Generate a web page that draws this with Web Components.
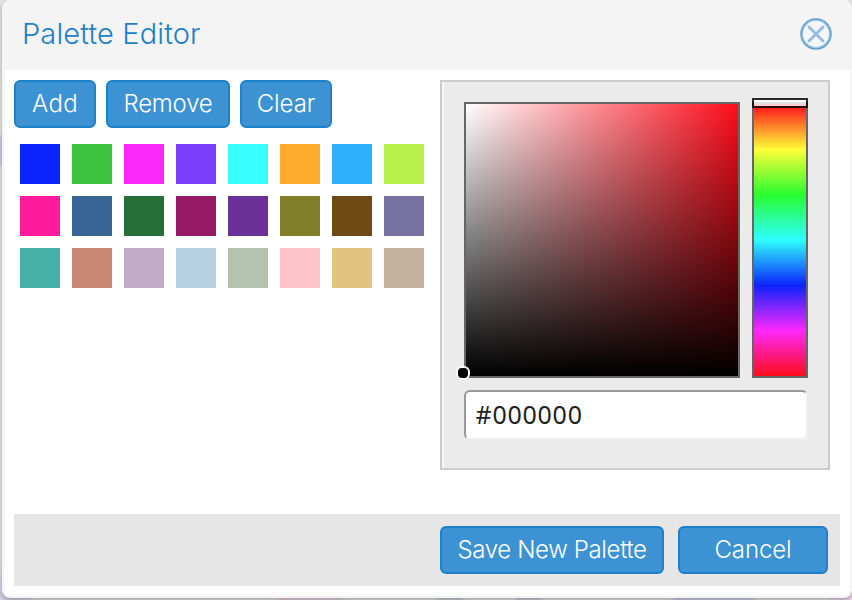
<!DOCTYPE html>
<html lang="en"><head><meta charset="utf-8"><title>Palette Editor</title>
<style>
html,body{margin:0;height:100%;overflow:hidden}
body{font-family:Inter,"Liberation Sans",sans-serif;
background:linear-gradient(90deg,#d4d0e4 28px,#e4e4e4 34px 276px,#e6cfe0 282px 340px,#e4e4e4 346px 434px,#c6d0d6 440px 460px,#e4e4e4 466px 514px,#ccc8d2 518px 538px,#e4e4e4 544px 670px,#ccccea 676px 752px,#e4e4e4 758px 824px,#ead2ea 832px) 0 100%/852px 6px no-repeat,
linear-gradient(#e4e4e4 134px,#cfcbe0 138px 164px,#e4e4e4 168px 560px,#d4d0e4 590px)}
</style></head><body>
<palette-dialog>
  <span slot="title">Palette Editor</span>
  <close-button slot="close"></close-button>
  <tool-bar slot="tools">
    <ui-button style="width:82px;--track:.3px">Add</ui-button>
    <ui-button style="width:124px;--track:-.2px">Remove</ui-button>
    <ui-button style="width:92px;--track:-.1px">Clear</ui-button>
  </tool-bar>
  <swatch-grid slot="swatches" colors="#0b24fb #3dc540 #fd28fc #7b3ffb #37fffe #fdac2d #2eb1fd #b8f14c #fd1a9d #366596 #266e37 #971a65 #6c3099 #80802b #6f4a14 #7772a2 #45b0a8 #c88774 #c2aac9 #b7d2e3 #b5c4b1 #fdc3c6 #e1c57f #c6b19e"></swatch-grid>
  <color-picker slot="picker" value="#000000"></color-picker>
  <ui-button slot="actions" style="width:224px;--track:-.35px">Save New Palette</ui-button>
  <ui-button slot="actions" style="width:150px;--track:-.1px">Cancel</ui-button>
</palette-dialog>
<script>
class Base extends HTMLElement{
  constructor(){super();this.attachShadow({mode:'open'}).innerHTML=this.view();}
  view(){return '';}
}
customElements.define('ui-button',class extends Base{
  view(){return `<style>
  :host{display:block;box-sizing:border-box;height:48px;flex:none}
  button{all:unset;box-sizing:border-box;width:100%;height:100%;display:flex;align-items:center;justify-content:center;border:2px solid #1e80c9;border-radius:6px;background:#3d92d3;color:#fff;font-family:inherit;font-weight:300;font-size:24px;line-height:44px;letter-spacing:var(--track,0);font-variant-ligatures:none;font-feature-settings:"calt" 0;white-space:nowrap}
  </style><button><slot></slot></button>`;}
});
customElements.define('tool-bar',class extends Base{
  view(){return `<style>:host{display:flex;gap:10px}</style><slot></slot>`;}
});
customElements.define('close-button',class extends Base{
  view(){return `<style>:host{display:block;width:32px;height:32px}svg{display:block}</style>
  <svg width="32" height="32" viewBox="0 0 32 32" fill="none"><circle cx="16" cy="16" r="14.4" fill="#f4f7fa" stroke="#a5c8e2" stroke-width="3"/><circle cx="16" cy="16" r="14.8" stroke="#5d9fcc" stroke-width="1.3"/><path d="M9 9l14 14M23 9L9 23" stroke="#94bae2" stroke-width="2.8" stroke-linecap="round"/></svg>`;}
});
customElements.define('swatch-grid',class extends Base{
  connectedCallback(){
    this.shadowRoot.innerHTML=`<style>:host{display:grid;grid-template-columns:repeat(8,40px);grid-auto-rows:40px;gap:12px;padding:16px 0 0 6px}</style>`+
    this.getAttribute('colors').split(' ').map(c=>`<div style="background:${c}"></div>`).join('');
  }
});
customElements.define('color-picker',class extends Base{
  connectedCallback(){
    this.shadowRoot.innerHTML=`<style>
    :host{display:block;box-sizing:border-box;width:390px;height:390px;border:2px solid #ccc;background:#ebebeb;padding:20px 20px 0 22px;box-shadow:inset 2px 0 #f7f7f7}
    .fields{display:flex;gap:12px}
    .sat,.hue{position:relative;box-sizing:border-box;height:276px;border:2px solid #666}
    .sat{width:276px;background:linear-gradient(to top,#000,transparent) padding-box,linear-gradient(to right,#fff,#fc0d1b) padding-box}
    .hue{width:56px;background:linear-gradient(#fc0d1b,#fffd38 16.67%,#29fd2f 33.33%,#2dfffe 50%,#0b24fb 66.67%,#fd28fc 83.33%,#fc0d1b) padding-box}
    .dot{position:absolute;box-sizing:border-box;left:-10px;bottom:-4px;width:14px;height:14px;border:2px solid #fff;border-radius:6px;background:#000}
    .bar{position:absolute;box-sizing:border-box;left:-2px;top:-6px;width:56px;height:10px;border:2px solid rgba(0,0,0,.82);background:rgba(255,255,255,.8) padding-box}
    .hex{display:block;box-sizing:border-box;width:344px;height:50px;margin-top:12px;padding:0 9.5px;border:2px solid;border-color:#999 #eee #eee #999;border-radius:6px;background:#fff;color:#222;font:25px/45px "Noto Sans",sans-serif;letter-spacing:.75px}
    </style><div class="fields"><div class="sat"><div class="dot"></div></div><div class="hue"><div class="bar"></div></div></div>
    <div class="hex">${this.getAttribute('value')}</div>`;
  }
});
customElements.define('palette-dialog',class extends Base{
  view(){return `<style>
  :host{display:flex;flex-direction:column;box-sizing:border-box;width:850px;height:598px;margin-left:2px;border:2px solid #f4f4f4;border-top:0;border-radius:8px;background:#fff;box-shadow:0 2px 4px rgba(0,0,0,.3);overflow:hidden}
  header{display:flex;justify-content:space-between;align-items:center;box-sizing:border-box;flex:none;height:70px;padding:0 18px 2px;background:#f4f4f4}
  .title{color:#1e80c9;font-size:29px;font-weight:300;letter-spacing:.15px;font-variant-ligatures:none;font-feature-settings:"calt" 0;padding-bottom:2px}
  main{display:flex;justify-content:space-between;flex:1;padding:10px 20px 0 10px}
  footer{display:flex;justify-content:flex-end;gap:14px;box-sizing:border-box;flex:none;height:72px;margin:0 10px 10px;padding:12px;background:#e6e6e6}
  </style><header><div class="title"><slot name="title"></slot></div><slot name="close"></slot></header>
  <main><div><slot name="tools"></slot><slot name="swatches"></slot></div><slot name="picker"></slot></main>
  <footer><slot name="actions"></slot></footer>`;}
});
</script></body></html>
